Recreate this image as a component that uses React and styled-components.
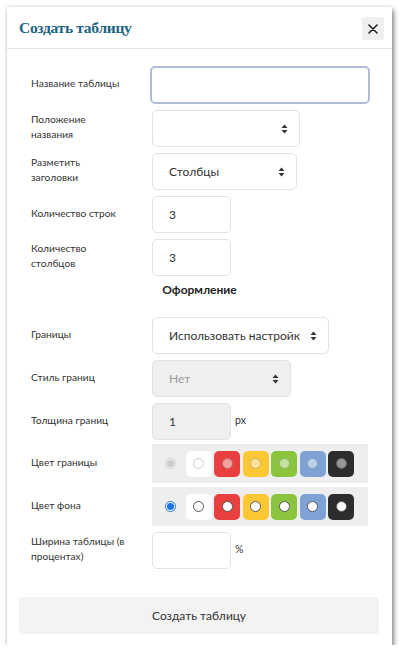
import React from "react";
import styled, { createGlobalStyle } from "styled-components";

const GlobalStyle = createGlobalStyle`
  html, body {
    margin: 0;
    padding: 0;
    background: #fff;
  }
  body {
    font-family: Lato, "Noto Sans", sans-serif;
    color: #333;
  }
`;

const Modal = styled.div`
  margin: 7px 0 0 7px;
  width: 385px;
  height: 638px;
  background: #fff;
  box-shadow: 2px 3px 5px rgba(0, 0, 0, 0.45), 0 0 4px rgba(0, 0, 0, 0.12);
  display: flex;
  flex-direction: column;
  box-sizing: border-box;
`;

const Header = styled.div`
  height: 42px;
  border-bottom: 1px solid #e4e4e4;
  display: flex;
  align-items: center;
  justify-content: space-between;
  padding: 0 8px 0 12px;
  box-sizing: border-box;
`;

const Title = styled.h2`
  margin: 0;
  font-family: "Liberation Serif", "DejaVu Serif", serif;
  font-weight: bold;
  font-size: 15.5px;
  letter-spacing: -0.3px;
  color: #1b6382;
`;

const CloseButton = styled.button`
  width: 22px;
  height: 23px;
  border: 0;
  border-radius: 3px;
  background: #efefef;
  display: flex;
  align-items: center;
  justify-content: center;
  padding: 0;
  margin-top: 2px;
  color: #222;
`;

const Body = styled.div`
  padding: 17px 24px 0 24px;
  display: flex;
  flex-direction: column;
  gap: 6px;
`;

const Row = styled.div`
  display: grid;
  grid-template-columns: 121px 1fr;
  align-items: center;
  min-height: ${p => p.h || 37}px;
  margin-top: ${p => p.tight ? -2 : 0}px;
`;

const Label = styled.div`
  font-size: 10.2px;
  line-height: 15px;
  color: #333;
  margin-top: -3px;
  padding-right: 6px;
`;

const Field = styled.div`
  display: flex;
  align-items: center;
  gap: 4px;
`;

const TextBox = styled.div`
  width: ${p => p.w}px;
  height: ${p => p.focused ? 38 : 37}px;
  box-sizing: border-box;
  border: ${p => p.focused ? "2px solid #b1bbda" : "1px solid #e2e2e2"};
  margin-left: ${p => p.focused ? -2 : 0}px;
  border-radius: 5px;
  background: ${p => p.disabled ? "#efefef" : "#fff"};
  display: flex;
  align-items: center;
  justify-content: space-between;
  gap: 4px;
  padding: 0 11px 0 16px;
  font-size: 12px;
  white-space: nowrap;
  overflow: hidden;
  color: ${p => p.disabled && p.select ? "#9a9a9a" : "#333"};
  span {
    overflow: hidden;
  }
  svg {
    flex-shrink: 0;
  }
`;

const Unit = styled.span`
  font-size: 10.5px;
  color: #333;
  margin-top: -3px;
`;

const Section = styled.div`
  text-align: center;
  font-weight: bold;
  font-size: 12px;
  line-height: 14px;
  color: #222;
  margin-top: 1px;
  margin-bottom: 14px;
`;

const Strip = styled.div`
  width: 216px;
  height: 39px;
  box-sizing: border-box;
  background: #eee;
  display: flex;
  align-items: center;
  gap: 2.5px;
  padding-left: 5px;
`;

const Swatch = styled.div`
  width: 26px;
  height: 26px;
  border-radius: 5px;
  background: ${p => p.color || "transparent"};
  display: flex;
  align-items: center;
  justify-content: center;
`;

const Radio = styled.span`
  width: 11px;
  height: 11px;
  box-sizing: border-box;
  border-radius: 50%;
  border: 1px solid ${p => p.checked ? "#1a73e8" : "#555"};
  background: #fff;
  display: flex;
  align-items: center;
  justify-content: center;
  opacity: ${p => p.disabled ? 0.5 : 1};
  ${p => p.disabled && !p.checked ? "border-color: #999;" : ""}
  ${p => p.disabled && p.checked ? "border-color: #aaa; background: #f0f0f0;" : ""}
  &::after {
    content: "";
    display: ${p => p.checked ? "block" : "none"};
    width: 7px;
    height: 7px;
    border-radius: 50%;
    background: ${p => p.disabled ? "#aaa" : "#1a73e8"};
  }
`;

const Footer = styled.div`
  margin-top: auto;
  padding: 0 13px 11px 12px;
`;

const SubmitButton = styled.button`
  width: 100%;
  height: 37px;
  border: 0;
  border-radius: 4px;
  background: #f3f3f3;
  font-family: Lato, "Noto Sans", sans-serif;
  font-size: 12px;
  color: #333;
`;

const SelectArrow = () => (
  <svg width="7" height="10" viewBox="0 0 7 10">
    <path d="M3.5 0.5 L6.5 4 L0.5 4 Z" fill="#333" />
    <path d="M3.5 9.5 L6.5 6 L0.5 6 Z" fill="#333" />
  </svg>
);

const CloseIcon = () => (
  <svg width="10" height="10" viewBox="0 0 10 10">
    <path d="M1 1 L9 9 M9 1 L1 9" stroke="#222" strokeWidth="1.6" strokeLinecap="round" />
  </svg>
);

const colors = ["#fff", "#e8403e", "#fbc833", "#8bc540", "#7ea1d6", "#2d2d2d"];

function ColorPicker({ disabled }) {
  return (
    <Strip>
      <Swatch>
        <Radio checked disabled={disabled} />
      </Swatch>
      {colors.map(c => (
        <Swatch key={c} color={c}>
          <Radio disabled={disabled} />
        </Swatch>
      ))}
    </Strip>
  );
}

export default function App() {
  return (
    <>
      <GlobalStyle />
      <Modal>
        <Header>
          <Title>Создать таблицу</Title>
          <CloseButton><CloseIcon /></CloseButton>
        </Header>
        <Body>
          <Row>
            <Label>Название таблицы</Label>
            <Field><TextBox w={220} focused /></Field>
          </Row>
          <Row>
            <Label>Положение<br />названия</Label>
            <Field><TextBox w={148} select><span /><SelectArrow /></TextBox></Field>
          </Row>
          <Row>
            <Label>Разметить<br />заголовки</Label>
            <Field><TextBox w={145} select><span>Столбцы</span><SelectArrow /></TextBox></Field>
          </Row>
          <Row>
            <Label>Количество строк</Label>
            <Field><TextBox w={79}>3</TextBox></Field>
          </Row>
          <Row>
            <Label>Количество<br />столбцов</Label>
            <Field><TextBox w={79}>3</TextBox></Field>
          </Row>
          <Section>Оформление</Section>
          <Row h={36}>
            <Label>Границы</Label>
            <Field><TextBox w={177} select><span>Использовать настройк</span><SelectArrow /></TextBox></Field>
          </Row>
          <Row>
            <Label>Стиль границ</Label>
            <Field><TextBox w={139} select disabled><span>Нет</span><SelectArrow /></TextBox></Field>
          </Row>
          <Row>
            <Label>Толщина границ</Label>
            <Field><TextBox w={79} disabled>1</TextBox><Unit>px</Unit></Field>
          </Row>
          <Row h={39} tight>
            <Label>Цвет границы</Label>
            <Field><ColorPicker disabled /></Field>
          </Row>
          <Row h={39} tight>
            <Label>Цвет фона</Label>
            <Field><ColorPicker /></Field>
          </Row>
          <Row>
            <Label>Ширина таблицы (в<br />процентах)</Label>
            <Field><TextBox w={79} /><Unit>%</Unit></Field>
          </Row>
        </Body>
        <Footer>
          <SubmitButton>Создать таблицу</SubmitButton>
        </Footer>
      </Modal>
    </>
  );
}
